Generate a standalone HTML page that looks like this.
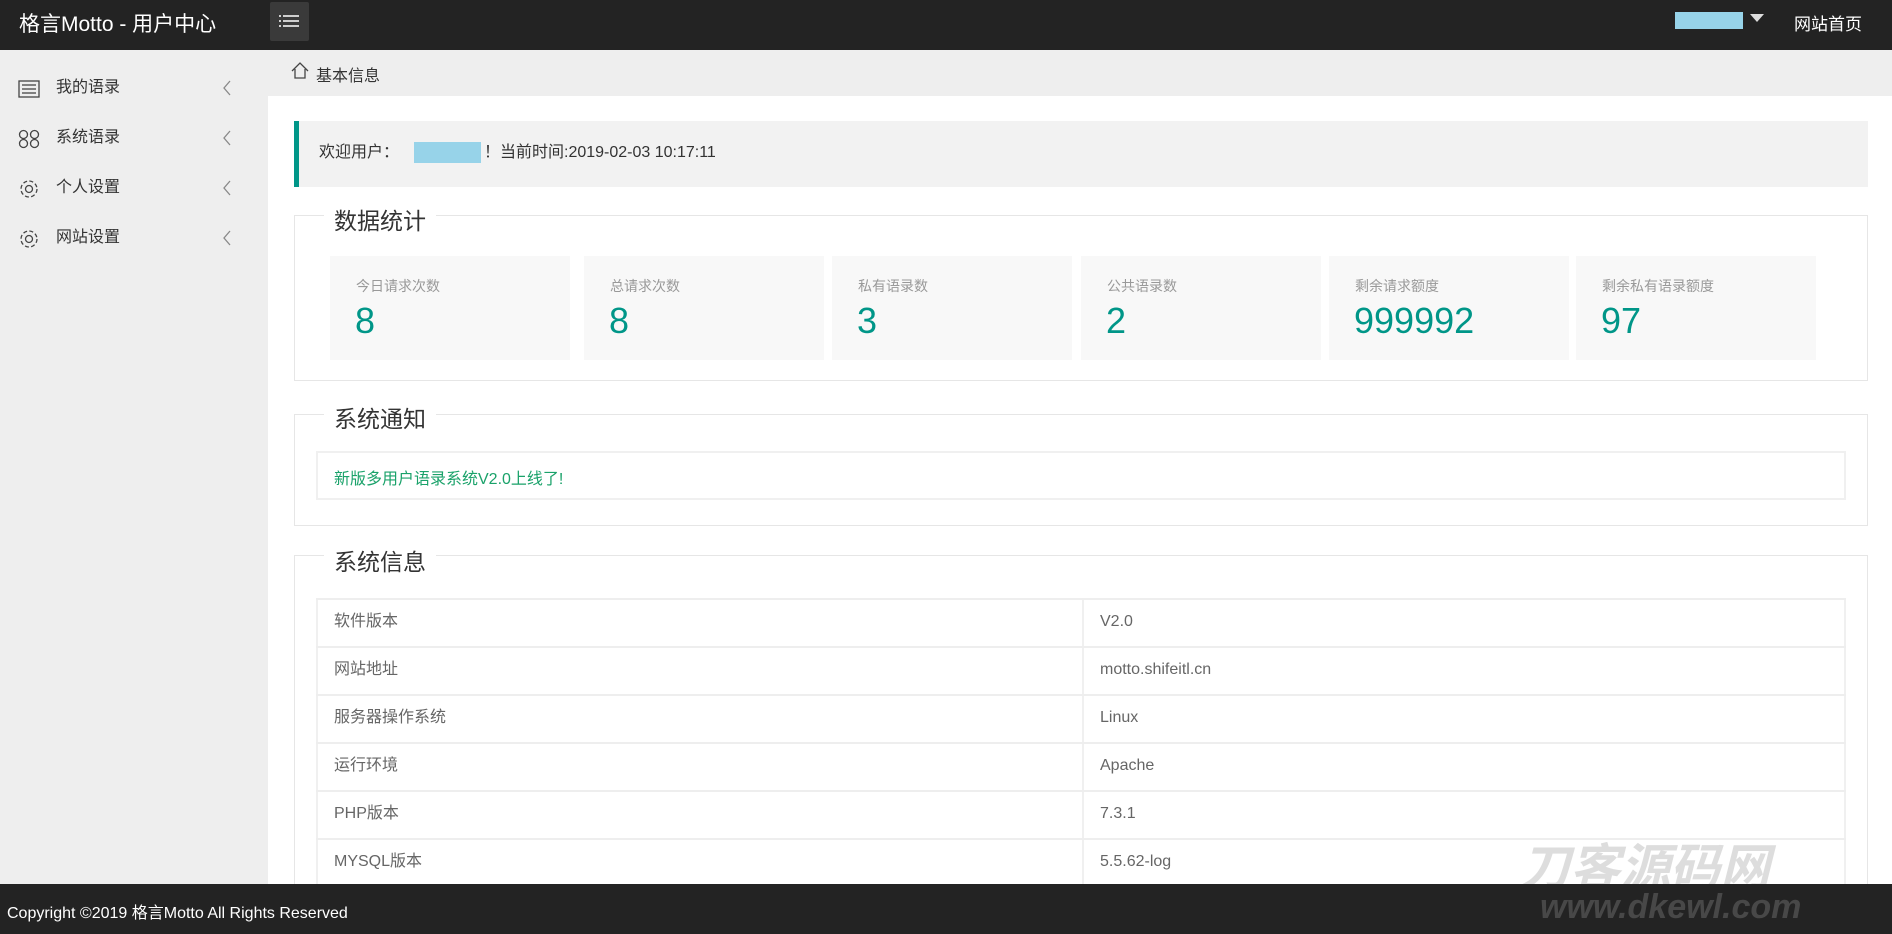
<!DOCTYPE html>
<html><head><meta charset="utf-8"><style>
*{margin:0;padding:0;box-sizing:border-box}
html,body{width:1892px;height:934px;overflow:hidden}
body{position:relative;background:#fff;font-family:"Liberation Sans","Noto Sans CJK SC",sans-serif;color:#333}
.abs{position:absolute}
.hdr{left:0;top:0;width:1892px;height:50px;background:#232323}
.side{left:0;top:50px;width:268px;height:834px;background:#eee}
.crumb{left:268px;top:50px;width:1624px;height:46px;background:#eee}
.nav{position:absolute;left:0;width:268px;height:40px;font-size:16px;color:#333}
.nav span{position:absolute;left:56px;top:10px;line-height:20px}
.nav svg.ch{position:absolute;left:222px;top:12px}
.fs{border:1px solid #e6e6e6;position:absolute}
.lg{position:absolute;background:#fff;padding:0 10px;font-size:23px;color:#333}
.card{position:absolute;top:256px;width:240px;height:104px;background:#f8f8f8}
.card .l{position:absolute;left:26px;top:20px;font-size:14px;color:#999}
.card .n{position:absolute;left:25px;top:44px;font-size:36px;color:#009688}
.row{position:absolute;left:316px;width:1530px;height:48px;border-top:2px solid #eee;font-size:16px;color:#666}
.row span{position:absolute;top:12px;line-height:20px}
</style></head><body>
<div class="abs hdr"></div>
<div class="abs" style="left:19px;top:8px;font-size:21px;color:#fff">格言Motto - 用户中心</div>
<div class="abs" style="left:270px;top:2px;width:39px;height:39px;background:#3a3a3a;border-radius:2px"></div>
<svg class="abs" style="left:279px;top:13px" width="20" height="16"><g stroke="#fff" stroke-width="1.5"><line x1="0" y1="3" x2="2" y2="3"/><line x1="4" y1="3" x2="20" y2="3"/><line x1="0" y1="8" x2="2" y2="8"/><line x1="4" y1="8" x2="20" y2="8"/><line x1="0" y1="13" x2="2" y2="13"/><line x1="4" y1="13" x2="20" y2="13"/></g></svg>
<div class="abs" style="left:1675px;top:12px;width:68px;height:17px;background:#97d3e9"></div>
<svg class="abs" style="left:1750px;top:14px" width="14" height="9"><polygon points="0,0 14,0 7,8" fill="#ddd"/></svg>
<div class="abs" style="left:1794px;top:10px;font-size:17px;color:#fff">网站首页</div>

<div class="abs side"></div>
<div class="nav" style="top:68px"><svg class="abs" style="left:18px;top:12px" width="22" height="18" fill="none" stroke="#444" stroke-width="1.3"><rect x="1" y="1" width="20" height="16"/><line x1="4" y1="5" x2="18" y2="5"/><line x1="4" y1="9" x2="18" y2="9"/><line x1="4" y1="13" x2="18" y2="13"/></svg><span>我的语录</span><svg class="ch" width="10" height="16"><polyline points="8,1 2,8 8,15" fill="none" stroke="#888" stroke-width="1.3"/></svg></div>
<div class="nav" style="top:118px"><svg class="abs" style="left:18px;top:11px" width="22" height="20" fill="none" stroke="#444" stroke-width="1.3"><circle cx="5.5" cy="5.5" r="4"/><circle cx="16.5" cy="5.5" r="4"/><circle cx="5.5" cy="14.5" r="4"/><circle cx="16.5" cy="14.5" r="4"/></svg><span>系统语录</span><svg class="ch" width="10" height="16"><polyline points="8,1 2,8 8,15" fill="none" stroke="#888" stroke-width="1.3"/></svg></div>
<div class="nav" style="top:168px"><svg class="abs" style="left:18px;top:10px" width="22" height="22" fill="none" stroke="#444" stroke-width="1.3"><circle cx="11" cy="11" r="3.5"/><circle cx="11" cy="11" r="8" stroke-dasharray="4 2.3"/></svg><span>个人设置</span><svg class="ch" width="10" height="16"><polyline points="8,1 2,8 8,15" fill="none" stroke="#888" stroke-width="1.3"/></svg></div>
<div class="nav" style="top:218px"><svg class="abs" style="left:18px;top:10px" width="22" height="22" fill="none" stroke="#444" stroke-width="1.3"><circle cx="11" cy="11" r="3.5"/><circle cx="11" cy="11" r="8" stroke-dasharray="4 2.3"/></svg><span>网站设置</span><svg class="ch" width="10" height="16"><polyline points="8,1 2,8 8,15" fill="none" stroke="#888" stroke-width="1.3"/></svg></div>

<div class="abs crumb"></div>
<svg class="abs" style="left:291px;top:62px" width="18" height="17" fill="none" stroke="#444" stroke-width="1.3"><polyline points="1,9 9,1 17,9"/><polyline points="4,7 4,16 14,16 14,7"/></svg>
<div class="abs" style="left:316px;top:62px;font-size:16px;color:#333">基本信息</div>

<div class="abs" style="left:294px;top:121px;width:1574px;height:66px;background:#f2f2f2;border-left:5px solid #009688"></div>
<div class="abs" style="left:319px;top:143px;font-size:16px;line-height:20px;color:#333">欢迎用户：</div>
<div class="abs" style="left:414px;top:142px;width:67px;height:21px;background:#97d3e9"></div>
<div class="abs" style="left:484px;top:143px;font-size:16px;line-height:20px;color:#333">！当前时间:2019-02-03 10:17:11</div>

<div class="fs" style="left:294px;top:215px;width:1574px;height:166px"></div>
<div class="lg" style="left:324px;top:202px">数据统计</div>
<div class="card" style="left:330px"><div class="l">今日请求次数</div><div class="n">8</div></div>
<div class="card" style="left:584px"><div class="l">总请求次数</div><div class="n">8</div></div>
<div class="card" style="left:832px"><div class="l">私有语录数</div><div class="n">3</div></div>
<div class="card" style="left:1081px"><div class="l">公共语录数</div><div class="n">2</div></div>
<div class="card" style="left:1329px"><div class="l">剩余请求额度</div><div class="n">999992</div></div>
<div class="card" style="left:1576px"><div class="l">剩余私有语录额度</div><div class="n">97</div></div>

<div class="fs" style="left:294px;top:414px;width:1574px;height:112px"></div>
<div class="lg" style="left:324px;top:400px">系统通知</div>
<div class="abs" style="left:316px;top:451px;width:1530px;height:49px;border:2px solid #f0f0f0"></div>
<div class="abs" style="left:334px;top:465px;font-size:16px;color:#1aa26a">新版多用户语录系统V2.0上线了!</div>

<div class="fs" style="left:294px;top:555px;width:1574px;height:370px"></div>
<div class="lg" style="left:324px;top:543px">系统信息</div>
<div class="abs" style="left:316px;top:598px;width:1530px;height:286px;border-left:2px solid #f0f0f0;border-right:2px solid #f0f0f0"></div>
<div class="abs" style="left:1082px;top:598px;width:2px;height:286px;background:#f0f0f0"></div>
<div class="row" style="top:598px"><span style="left:18px">软件版本</span><span style="left:784px">V2.0</span></div>
<div class="row" style="top:646px"><span style="left:18px">网站地址</span><span style="left:784px">motto.shifeitl.cn</span></div>
<div class="row" style="top:694px"><span style="left:18px">服务器操作系统</span><span style="left:784px">Linux</span></div>
<div class="row" style="top:742px"><span style="left:18px">运行环境</span><span style="left:784px">Apache</span></div>
<div class="row" style="top:790px"><span style="left:18px">PHP版本</span><span style="left:784px">7.3.1</span></div>
<div class="row" style="top:838px;height:46px"><span style="left:18px">MYSQL版本</span><span style="left:784px">5.5.62-log</span></div>

<div class="abs" style="left:1520px;top:828px;font-size:50px;font-weight:bold;font-style:italic;color:rgba(120,120,120,.25)">刀客源码网</div>

<div class="abs" style="left:0;top:884px;width:1892px;height:50px;background:#232323"></div>
<div class="abs" style="left:1540px;top:888px;font-size:34px;font-weight:bold;font-style:italic;color:rgba(160,160,160,.3)">www.dkewl.com</div>
<div class="abs" style="left:7px;top:899px;font-size:16px;color:#fff">Copyright ©2019 格言Motto All Rights Reserved</div>
</body></html>
